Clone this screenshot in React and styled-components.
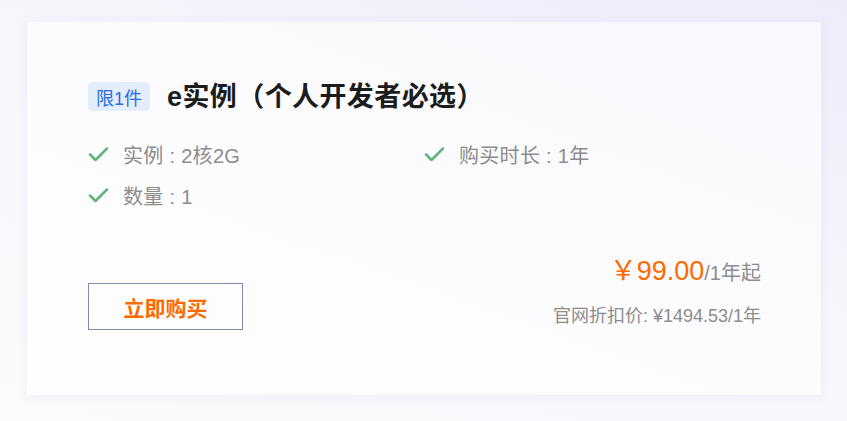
import React from 'react'
import styled, { createGlobalStyle } from 'styled-components'

const GlobalStyle = createGlobalStyle`
  html, body {
    margin: 0;
    padding: 0;
  }
  body {
    font-family: "Liberation Sans", Arial, "Noto Sans CJK SC", sans-serif;
    background: linear-gradient(200deg, #ececfb 0%, #f6f6fc 45%, #fbfbfd 100%);
    min-height: 421px;
  }
`

const Page = styled.div`
  width: 847px;
  height: 421px;
  padding: 22px 26px 0 27px;
  box-sizing: border-box;
`

const Card = styled.div`
  width: 794px;
  height: 373px;
  box-sizing: border-box;
  padding: 60px 60px 0 61px;
  background: linear-gradient(200deg, #f8f8fd 0%, #fcfcfe 50%, #fefefe 100%);
  box-shadow: 0 2px 10px rgba(180, 185, 210, 0.18);
  display: flex;
  flex-direction: column;
`

const TitleRow = styled.div`
  display: flex;
  align-items: center;
  gap: 17px;
  height: 29px;
`

const Badge = styled.span`
  height: 29px;
  padding: 0 8px;
  display: flex;
  align-items: center;
  background: #e4edfb;
  border-radius: 4px;
  color: #2b6de0;
  font-size: 18px;
`

const Title = styled.h2`
  margin: 0;
  font-size: 27px;
  line-height: 29px;
  font-weight: bold;
  color: #1c1c1c;
  letter-spacing: 0.4px;
  position: relative;
  top: 1px;
`

const Features = styled.div`
  display: grid;
  grid-template-columns: 336px auto;
  row-gap: 17px;
  margin-top: 31px;
`

const Feature = styled.div`
  display: flex;
  align-items: center;
  gap: 14px;
  height: 24px;
  color: #8c8c8c;
  font-size: 20px;
  letter-spacing: 0.3px;
`

const Bottom = styled.div`
  display: flex;
  justify-content: space-between;
  align-items: flex-start;
  margin-top: 48px;
`

const BuyButton = styled.button`
  margin-top: 28px;
  width: 155px;
  height: 47px;
  padding: 0;
  background: transparent;
  border: 1px solid #7d8cad;
  color: #ff6a00;
  font-family: inherit;
  font-size: 21px;
  font-weight: bold;
  cursor: pointer;
`

const PriceBox = styled.div`
  display: flex;
  flex-direction: column;
  align-items: flex-end;
`

const Price = styled.div`
  color: #8c8c8c;
  font-size: 20px;
  line-height: 32px;
  strong {
    color: #ff6a00;
    font-size: 27px;
    font-weight: normal;
  }
`

const Original = styled.div`
  margin-top: 16px;
  color: #8c8c8c;
  font-size: 18px;
  line-height: 22px;
`

const Check = () => (
  <svg width="21" height="20" viewBox="0 0 21 20" fill="none">
    <path d="M2 10.5 L7.5 16 L19 4.5" stroke="#5cb67a" strokeWidth="2.5" strokeLinecap="round" strokeLinejoin="round" />
  </svg>
)

const features = ['实例 : 2核2G', '购买时长 : 1年', '数量 : 1']

export default function App() {
  return (
    <>
      <GlobalStyle />
      <Page>
        <Card>
          <TitleRow>
            <Badge>限1件</Badge>
            <Title>e实例（个人开发者必选）</Title>
          </TitleRow>
          <Features>
            {features.map((f) => (
              <Feature key={f}>
                <Check />
                <span>{f}</span>
              </Feature>
            ))}
          </Features>
          <Bottom>
            <BuyButton>立即购买</BuyButton>
            <PriceBox>
              <Price>
                <strong>￥99.00</strong>/1年起
              </Price>
              <Original>官网折扣价: ¥1494.53/1年</Original>
            </PriceBox>
          </Bottom>
        </Card>
      </Page>
    </>
  )
}
